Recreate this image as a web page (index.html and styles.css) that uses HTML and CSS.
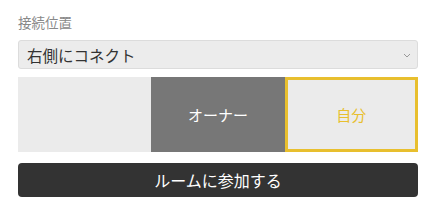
FILE: index.html
```html
<!DOCTYPE html>
<html lang="ja">
<head>
    <meta charset="UTF-8">
    <title>接続位置</title>
    <link rel="stylesheet" href="styles.css">
</head>
<body>
    <div class="panel">
        <label class="field-label" for="position">接続位置</label>
        <div class="select-wrap">
            <select id="position" class="select">
                <option>右側にコネクト</option>
            </select>
            <svg class="chevron" width="8" height="5" viewBox="0 0 8 5"><path d="M1 1l3 3 3-3" fill="none" stroke="#999" stroke-width="1"/></svg>
        </div>
        <div class="seats">
            <div class="seat"></div>
            <div class="seat owner">オーナー</div>
            <div class="seat me">自分</div>
        </div>
        <button class="join">ルームに参加する</button>
    </div>
</body>
</html>
```

FILE: styles.css
```css
body {
    margin: 0;
    background: #fff;
    font-family: "Noto Sans CJK JP", "Noto Sans", sans-serif;
    color: #333;
}

.panel {
    padding: 12px 15px 0 18px;
    width: 400px;
}

.field-label {
    display: block;
    font-size: 13.5px;
    line-height: 20px;
    color: #888;
    margin-bottom: 8px;
}

.select-wrap {
    position: relative;
    height: 29px;
}

.select {
    appearance: none;
    -webkit-appearance: none;
    width: 100%;
    height: 29px;
    box-sizing: border-box;
    border: 1px solid #dcdcdc;
    border-radius: 3px;
    background: #ececec;
    padding: 0 8px;
    font-family: inherit;
    font-size: 15.5px;
    color: #333;
}

.chevron {
    position: absolute;
    right: 7px;
    top: 13px;
}

.seats {
    display: grid;
    grid-template-columns: repeat(3, 1fr);
    margin-top: 8px;
    height: 75px;
}

.seat {
    box-sizing: border-box;
    background: #ebebeb;
    display: flex;
    align-items: center;
    justify-content: center;
    font-size: 15px;
}

.owner {
    background: #777;
    color: #fff;
}

.me {
    border: 3px solid #e8bf2e;
    color: #e8bf2e;
}

.join {
    display: block;
    width: 100%;
    height: 34px;
    margin-top: 11px;
    border: none;
    border-radius: 4px;
    background: #333;
    color: #fff;
    font-family: inherit;
    font-size: 16px;
}
```
